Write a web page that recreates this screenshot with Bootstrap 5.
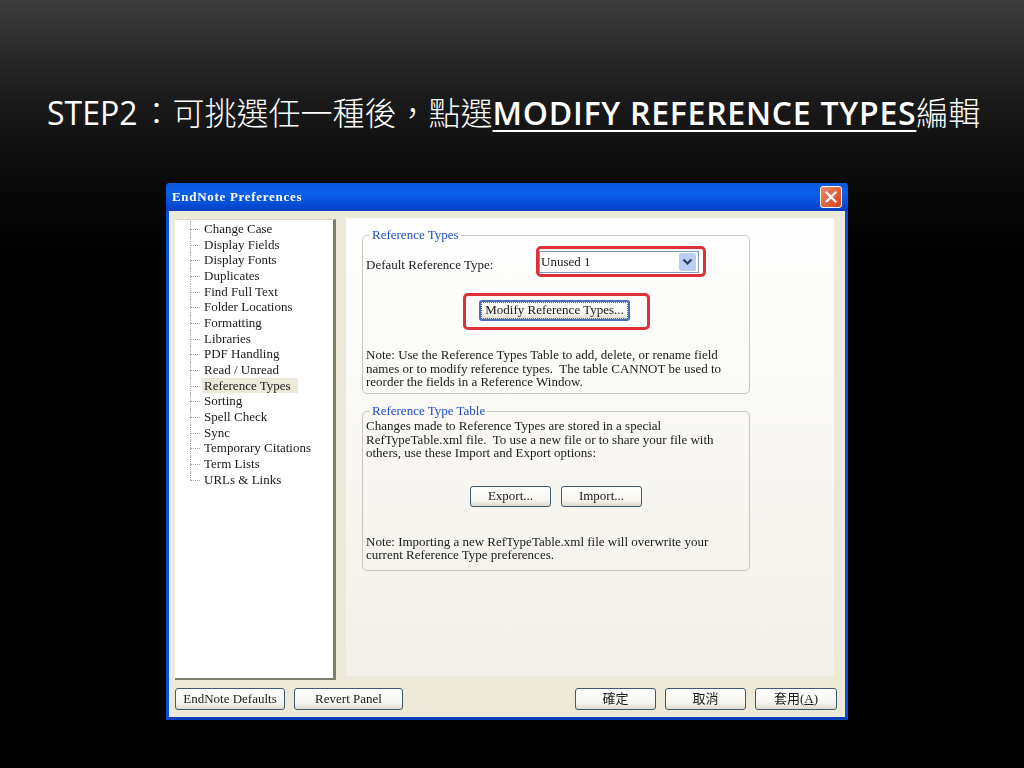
<!DOCTYPE html>
<html lang="zh-Hant">
<head>
<meta charset="utf-8">
<title>STEP2</title>
<link href="https://cdn.jsdelivr.net/npm/bootstrap@5.3.0/dist/css/bootstrap.min.css" rel="stylesheet">
<style>
html,body{height:100%}
body{margin:0;height:768px;overflow:hidden;background:linear-gradient(180deg,#3c3c3c 0,#1a1a1a 100px,#0a0a0a 180px,#000 260px);}
.slide-title{height:183px;padding:89px 0 0 47px;color:#fff;font:400 32px/44px "Open Sans","Noto Sans CJK TC",sans-serif;white-space:nowrap}
.slide-title .cjk{font-family:"Noto Sans CJK TC",sans-serif;font-weight:300;}
.slide-title .cjk-a{margin-left:3px;margin-right:-2px}
.slide-title .em{font-weight:600;letter-spacing:.75px;margin-left:2px;text-decoration:underline;text-decoration-thickness:2px;text-underline-offset:5px}
.xp-window{width:682px;height:537px;margin-left:166px;background:#ece9d8;border:solid #0a4fd8;border-width:0 3px 3px;border-bottom-color:#0a3fc0;border-radius:4px 4px 0 0;font:13px/13.5px "Liberation Serif","Noto Sans CJK TC",serif;color:#1a1a1a;filter:blur(.35px)}
.xp-title{height:28px;margin:0 -3px;padding:0 6px 0 6px;background:linear-gradient(180deg,#0a5ae0 0,#0a5ee8 40%,#0349d0 85%,#0a3fc0 100%);border-radius:4px 4px 0 0;color:#fff;font-weight:700;font-size:13px;letter-spacing:.7px}
.xp-close{width:22px;height:22px;border:1px solid #fff;border-radius:3px;background:linear-gradient(135deg,#ea8a66,#d8401c)}
.xp-body{height:506px}
.xp-main{padding:7px 11px 0 6px;height:471px}
.tree-box{width:161px;height:461px;margin-top:1px;background:#fff;border-right:3px solid #7f7d6e;border-bottom:2px solid #7f7d6e;border-top:1px solid #d8d5c4;padding:1px 0 0 15px;line-height:15.65px}
.tree-list{width:max-content;list-style:none;margin:0;padding:0}
.tree-list li{padding-left:14px;position:relative;width:max-content}
.tree-list li::before{content:"";position:absolute;left:0;top:8px;width:10px;border-top:1px dotted #aaa}
.tree-list li::after{content:"";position:absolute;left:0;top:0;height:100%;border-left:1px dotted #aaa}
.tree-list li:last-child::after{height:8px}
.tree-sel span{background:#ece9d8;display:inline-block;padding-right:7px;margin-right:-7px;margin-left:-2px;padding-left:2px}
.pref-panel{margin-left:10px;width:488px;height:458px;padding:10px 16px 0;background:linear-gradient(180deg,#fff 0,#f8f7f3 50%,#f1efe8 100%)}
.xp-group{width:388px;margin:0;padding:0 3px;border:1px solid #c8c8c0;border-radius:5px;white-space:nowrap}
.group-a{height:166px;margin-bottom:10px}
.group-b{height:167px}
.xp-group legend{float:none;width:auto;margin:0 0 0 4px;padding:0 2px;font-size:13px;line-height:14px;color:#1c4ec4}
.mark-box{border:3px solid #de3039;border-radius:5px}
.row-label{width:170px;padding-top:11px}
.select-mark{width:170px;height:31px;margin-top:4px;padding-top:1px}
.xp-select{width:160px;height:22px;border:1px solid #7f9db9;background:#fff;padding:0 2px 0 1px}
.xp-arrow{width:17px;height:18px;background:#b9cef5;border-radius:2px}
.btn-mark{width:187px;height:37px;margin:16px auto 18px;padding:0 3px 2px 0}
.xp-btn{height:22px;padding:0;border:1px solid #3d5a72;border-radius:3px;background:linear-gradient(180deg,#fff 0,#f6f5ef 70%,#dcd9cc 100%);line-height:19px;color:#1a1a1a;text-align:center}
.xp-default{width:151px;height:21px;border:2px solid #4a6fb5;outline:1px dotted #666;outline-offset:-3px;line-height:15px}
.w-def{width:110px}.w-rev{width:109px}.w-act{width:81px}.w-act-wide{width:82px}
.note-text{margin:0}
.group-b .lead-note{margin:1px 0 26px}
.xp-export{width:81px;height:21px;line-height:18px}
.btn-gap{gap:10px}
.group-b .tail-note{margin:28px 0 0}
.btn-row{padding:0 8px 0 6px;height:22px;margin-top:6px}
.btn-gap-sm{gap:9px}
</style>
</head>
<body>
<div class="slide-title">STEP2<span class="cjk cjk-a">：可挑選任一種後，點選</span><span class="em">MODIFY REFERENCE TYPES</span><span class="cjk">編輯</span></div>
<div class="xp-window">
  <div class="xp-title d-flex align-items-center justify-content-between">
    <span>EndNote Preferences</span>
    <span class="xp-close d-flex align-items-center justify-content-center">
      <svg width="14" height="14" viewBox="0 0 14 14"><path d="M2.5 2.5l9 9M11.5 2.5l-9 9" stroke="#fff" stroke-width="2.4" stroke-linecap="round" fill="none"/></svg>
    </span>
  </div>
  <div class="xp-body">
    <div class="xp-main d-flex">
      <div class="tree-box flex-shrink-0">
        <ul class="tree-list">
          <li>Change Case</li><li>Display Fields</li><li>Display Fonts</li><li>Duplicates</li><li>Find Full Text</li><li>Folder Locations</li><li>Formatting</li><li>Libraries</li><li>PDF Handling</li><li>Read / Unread</li><li class="tree-sel"><span>Reference Types</span></li><li>Sorting</li><li>Spell Check</li><li>Sync</li><li>Temporary Citations</li><li>Term Lists</li><li>URLs &amp; Links</li>
        </ul>
      </div>
      <div class="pref-panel">
        <fieldset class="xp-group group-a">
          <legend>Reference Types</legend>
          <div class="d-flex align-items-center">
            <span class="row-label">Default Reference Type:</span>
            <div class="mark-box select-mark d-flex align-items-center">
              <div class="xp-select d-flex align-items-center justify-content-between">
                <span>Unused 1</span>
                <span class="xp-arrow d-flex align-items-center justify-content-center">
                  <svg width="11" height="8" viewBox="0 0 11 8"><path d="M1.5 1.5l4 4 4-4" stroke="#2b3f66" stroke-width="2.2" fill="none"/></svg>
                </span>
              </div>
            </div>
          </div>
          <div class="mark-box btn-mark d-flex align-items-center justify-content-center">
            <div class="xp-btn xp-default">Modify Reference Types...</div>
          </div>
          <p class="note-text">Note: Use the Reference Types Table to add, delete, or rename field<br>names or to modify reference types.&nbsp; The table CANNOT be used to<br>reorder the fields in a Reference Window.</p>
        </fieldset>
        <fieldset class="xp-group group-b">
          <legend>Reference Type Table</legend>
          <p class="lead-note">Changes made to Reference Types are stored in a special<br>RefTypeTable.xml file.&nbsp; To use a new file or to share your file with<br>others, use these Import and Export options:</p>
          <div class="d-flex justify-content-center btn-gap">
            <div class="xp-btn xp-export">Export...</div>
            <div class="xp-btn xp-export">Import...</div>
          </div>
          <p class="tail-note">Note: Importing a new RefTypeTable.xml file will overwrite your<br>current Reference Type preferences.</p>
        </fieldset>
      </div>
    </div>
    <div class="btn-row d-flex justify-content-between">
      <div class="d-flex btn-gap-sm">
        <div class="xp-btn w-def">EndNote Defaults</div>
        <div class="xp-btn w-rev">Revert Panel</div>
      </div>
      <div class="d-flex btn-gap-sm">
        <div class="xp-btn w-act">確定</div>
        <div class="xp-btn w-act">取消</div>
        <div class="xp-btn w-act-wide">套用(<u>A</u>)</div>
      </div>
    </div>
  </div>
</div>
<script src="https://cdn.jsdelivr.net/npm/bootstrap@5.3.0/dist/js/bootstrap.bundle.min.js"></script>
</body>
</html>
